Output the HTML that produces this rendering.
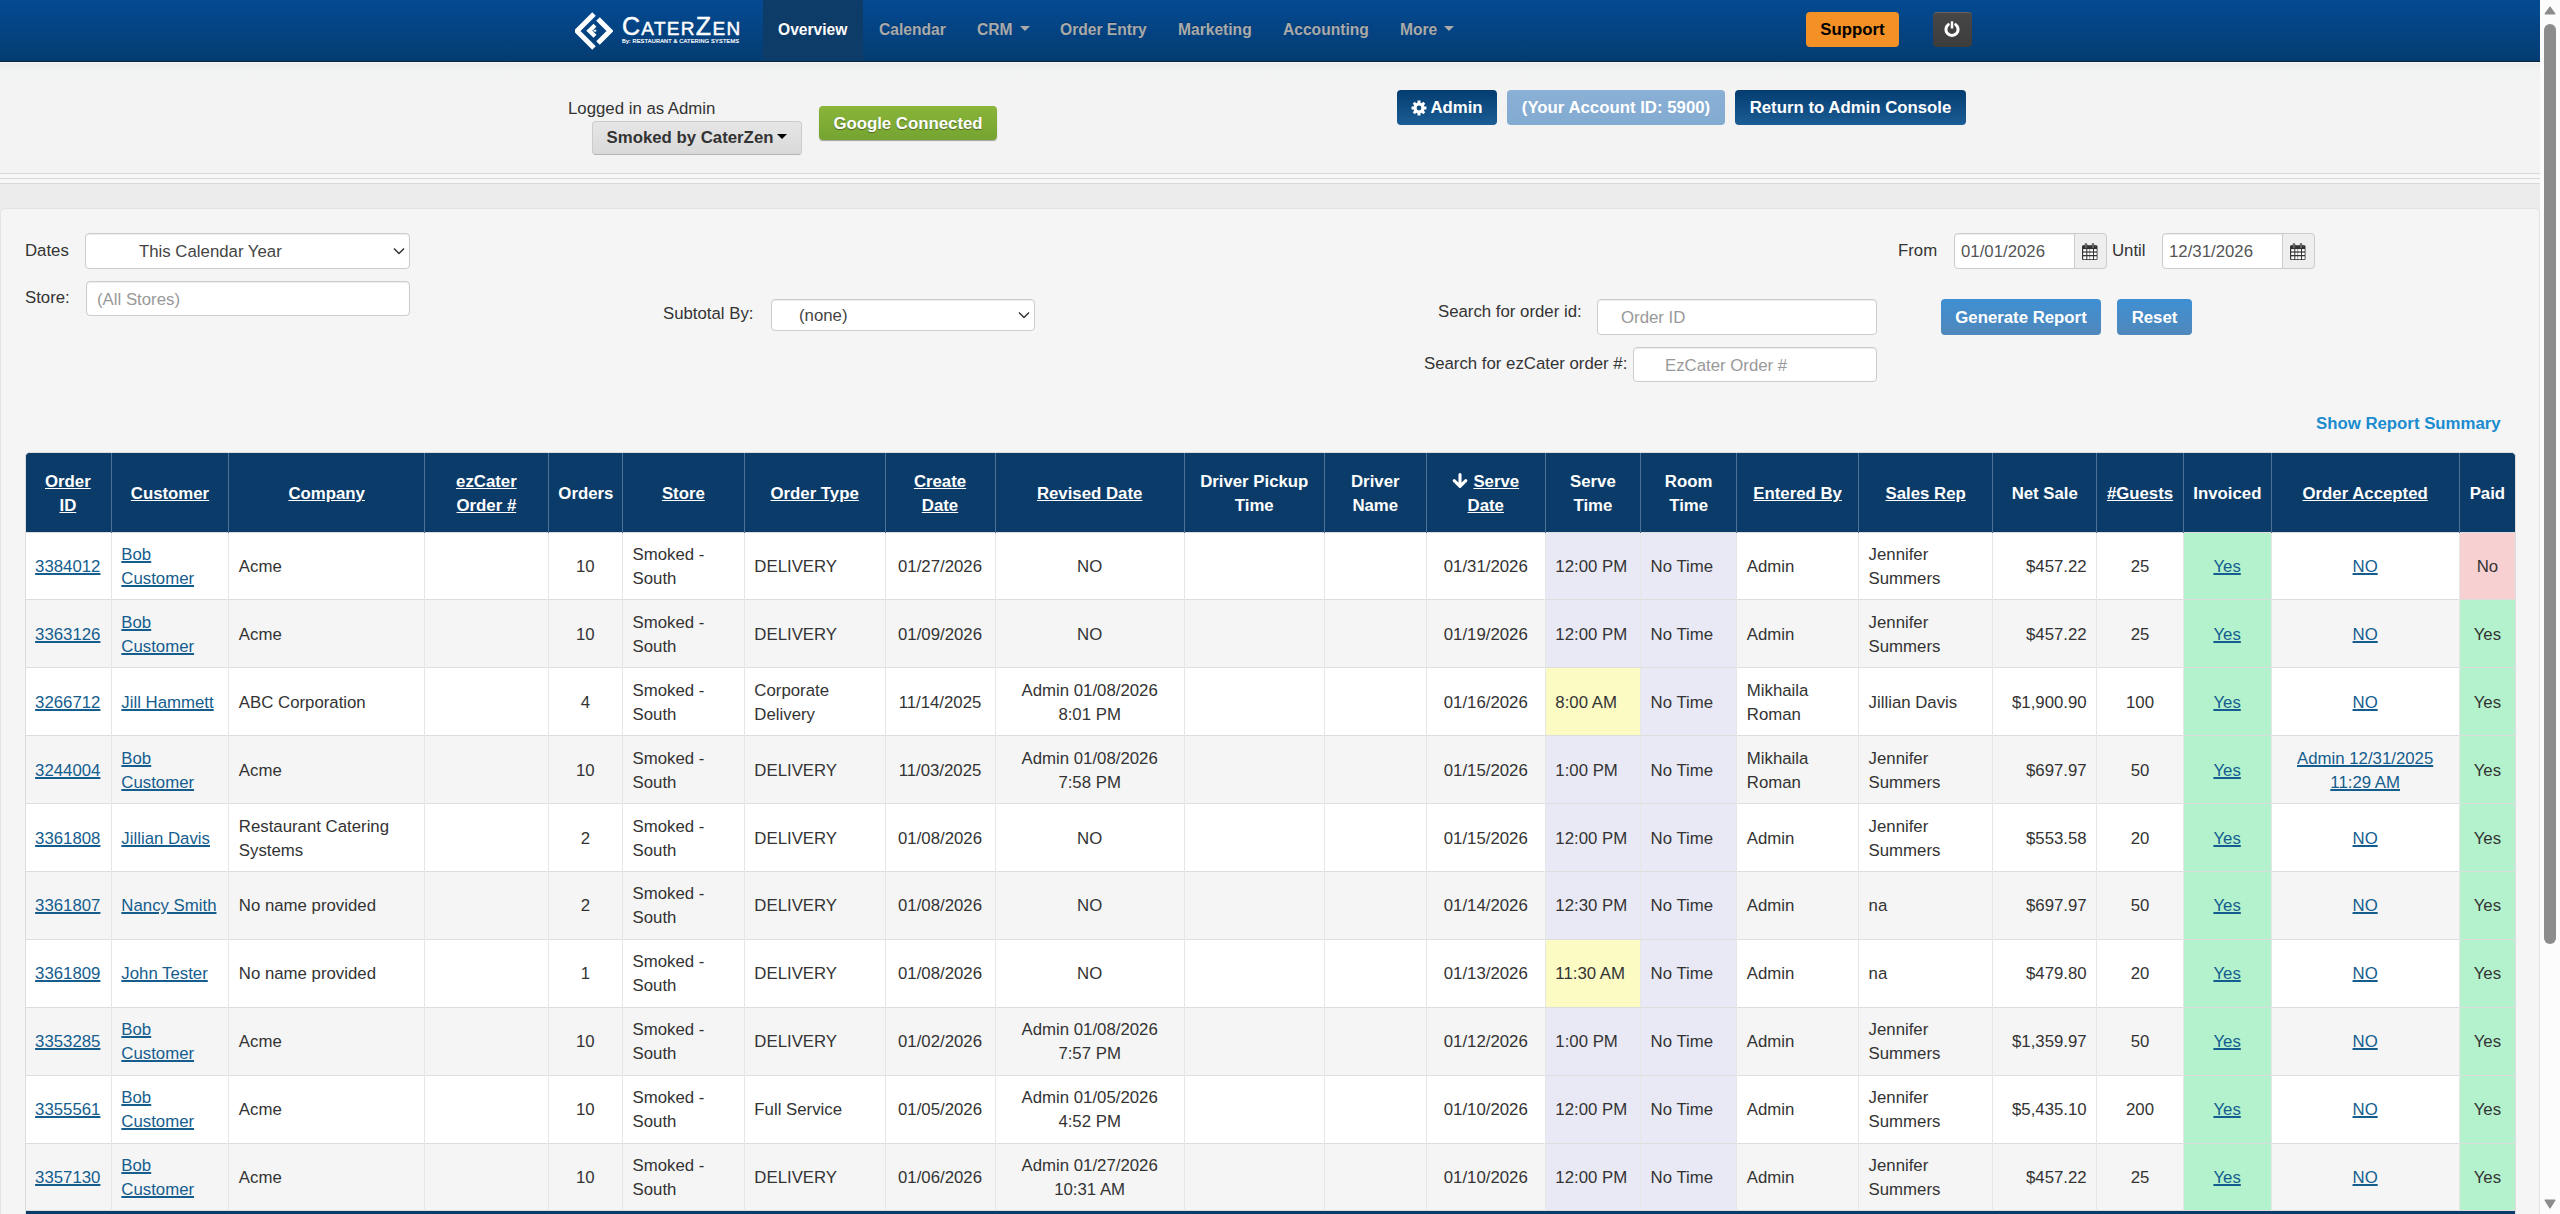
<!DOCTYPE html>
<html><head><meta charset="utf-8">
<style>
*{box-sizing:border-box;margin:0;padding:0}
html,body{width:2560px;height:1214px;overflow:hidden}
body{font-family:"Liberation Sans",sans-serif;font-size:16.8px;line-height:24px;color:#333;background:#ececec;position:relative}
.abs{position:absolute}
#nav{left:0;top:0;width:2540px;height:62px;background:linear-gradient(#044a93,#043c71);border-bottom:1px solid #0b1f33}
.nl{position:absolute;top:18px;font-weight:bold;color:#aaaaaa;font-size:15.6px;text-shadow:0 -1px 0 rgba(0,0,0,.25);line-height:24px;white-space:nowrap}
.caret{display:inline-block;width:0;height:0;border-left:5px solid transparent;border-right:5px solid transparent;border-top:5px solid;vertical-align:middle;margin-left:4px;position:relative;top:-2px}
#hdr{left:0;top:62px;width:2540px;height:111px;background:linear-gradient(#f7f7f7 0,#f7f7f7 1px,#eaebeb 1px,#f1f2f2 9px,#f3f3f3 20px)}
.btn{position:absolute;border-radius:4px;font-weight:bold;text-align:center;white-space:nowrap}
#lines{left:0;top:173px;width:2540px;height:35px;background:#ececec}
#panel{left:0;top:208px;width:2540px;height:1100px;background:#f5f5f5;border:1px solid #e3e3e3;border-radius:5px}
.lbl{position:absolute;white-space:nowrap;color:#333}
.inp{position:absolute;background:#fff;border:1px solid #ccc;border-radius:4px;color:#555;white-space:nowrap;box-shadow:inset 0 1px 1px rgba(0,0,0,.075)}
.ph{color:#999}
#scroll{left:2540px;top:0;width:20px;height:1214px;background:#fcfcfc}
table{position:absolute;left:-1.5px;top:0;border-collapse:collapse;table-layout:fixed;width:2490px}
th{background:#0b3c69;color:#fff;font-weight:bold;text-align:center;vertical-align:middle;border-left:1px solid #4f7095;padding:4px 9.6px 0;height:79px}
th:first-child{border-left:0}
th u{text-decoration:underline}
td{border-top:1px solid #ddd;border-left:1px solid #e6e6e6;vertical-align:middle;padding:2px 9.6px 0;height:67.9px}
tr.o td{background:#fff}
tr.e td{background:#f5f5f5}
td.c{text-align:center}
td.r{text-align:right}
a{color:#145d8e;text-decoration:underline;text-decoration-thickness:1.5px}
tr td.st{background:#e9e9f5}
tr td.y{background:#fcfbc4}
tr td.g{background:#b3f2cc}
tr td.rd{background:#f7d0d1}
</style></head>
<body>
<div id="nav" class="abs">
  <svg class="abs" style="left:575px;top:12px" width="38" height="38" viewBox="0 0 38 38">
    <path d="M19 2 L2 19 L19 36" fill="none" stroke="#fff" stroke-width="5"/>
    <path d="M23 7 L35 19 L23 31" fill="none" stroke="#fff" stroke-width="5"/>
    <path d="M20 13.2 L14.3 18.7 L20 24.2" fill="none" stroke="#fff" stroke-width="4.2"/><rect x="18.5" y="17.8" width="2.8" height="1.8" fill="#fff"/>
  </svg>
  <div class="abs" style="left:622px;top:14px;color:#fff;font-size:25px;line-height:25px;letter-spacing:1.3px;-webkit-text-stroke:0.45px #fff;white-space:nowrap">C<span style="font-size:19px">ATER</span>Z<span style="font-size:19px">EN</span></div>
  <div class="abs" style="left:622px;top:38px;color:#fff;font-size:5.6px;line-height:6px;white-space:nowrap;font-weight:normal;letter-spacing:0.2px;-webkit-text-stroke:0.2px #fff">By: RESTAURANT &amp; CATERING SYSTEMS</div>
  <div class="abs" style="left:763px;top:0;width:100px;height:60px;background:#0e3c69"></div>
  <div class="nl" style="left:778px;color:#fff">Overview</div>
  <div class="nl" style="left:879px">Calendar</div>
  <div class="nl" style="left:977px">CRM<span class="caret" style="margin-left:7px"></span></div>
  <div class="nl" style="left:1060px">Order Entry</div>
  <div class="nl" style="left:1178px">Marketing</div>
  <div class="nl" style="left:1283px">Accounting</div>
  <div class="nl" style="left:1400px">More<span class="caret" style="margin-left:7px"></span></div>
  <div class="btn" style="left:1806px;top:12px;width:93px;height:35px;line-height:35px;background:#f39026;color:#000">Support</div>
  <div class="btn" style="left:1933px;top:12px;width:39px;height:35px;background:linear-gradient(#474747,#3c3c3c);border-top:1px solid #6a625c"><svg class="abs" style="left:9.2px;top:5.2px" width="20" height="20" viewBox="0 0 20 20"><path d="M6.3 6.6 A6.1 6.1 0 1 0 13.7 6.6" fill="none" stroke="#fff" stroke-width="3" stroke-linecap="round"/><path d="M10 3.3v7.2" stroke="#fff" stroke-width="2.5"/></svg></div>
</div>
<div id="hdr" class="abs">
  <div class="lbl" style="left:568px;top:35px">Logged in as Admin</div>
  <div class="btn" style="left:592px;top:59px;width:210px;height:34px;line-height:32px;background:linear-gradient(#e6e6e6,#d9d9d9);border:1px solid #ccc;border-bottom-color:#b3b3b3;color:#333">Smoked by CaterZen<span class="caret" style="color:#000"></span></div>
  <div class="btn" style="left:819px;top:44px;width:178px;height:33.5px;line-height:35px;background:linear-gradient(#8ab43a,#74a431);box-shadow:0 1px 1px rgba(0,0,0,.35);color:#fff;text-shadow:0 1px 1px rgba(0,0,0,.4)">Google Connected</div>
  <div class="btn" style="left:1397px;top:28px;width:100px;height:35px;line-height:35px;background:linear-gradient(#043c70,#1b5d95);color:#fff"><svg width="16" height="16" viewBox="0 0 16 16" style="vertical-align:-3px;margin-right:3px"><path fill="#fff" fill-rule="evenodd" d="M6.61 2.58 L6.46 0.56 L9.54 0.56 L9.39 2.58 L10.85 3.18 L12.17 1.65 L14.35 3.83 L12.82 5.15 L13.42 6.61 L15.44 6.46 L15.44 9.54 L13.42 9.39 L12.82 10.85 L14.35 12.17 L12.17 14.35 L10.85 12.82 L9.39 13.42 L9.54 15.44 L6.46 15.44 L6.61 13.42 L5.15 12.82 L3.83 14.35 L1.65 12.17 L3.18 10.85 L2.58 9.39 L0.56 9.54 L0.56 6.46 L2.58 6.61 L3.18 5.15 L1.65 3.83 L3.83 1.65 L5.15 3.18Z M10.4 8a2.4 2.4 0 1 0 -4.8 0a2.4 2.4 0 1 0 4.8 0Z"/></svg>Admin</div>
  <div class="btn" style="left:1507px;top:28px;width:218px;height:35px;line-height:35px;background:linear-gradient(#8ab0d6,#83aad0);color:#fff">(Your Account ID: 5900)</div>
  <div class="btn" style="left:1735px;top:28px;width:231px;height:35px;line-height:35px;background:linear-gradient(#043c70,#1b5d95);color:#fff">Return to Admin Console</div>
</div>
<div id="lines" class="abs"><div class="abs" style="left:0;top:0;width:2540px;height:1px;background:#d8d8d8"></div><div class="abs" style="left:0;top:1px;width:2540px;height:4px;background:#f7f7f7"></div><div class="abs" style="left:0;top:5px;width:2540px;height:1px;background:#d8d8d8"></div><div class="abs" style="left:0;top:6px;width:2540px;height:4px;background:#f7f7f7"></div><div class="abs" style="left:0;top:10px;width:2540px;height:1px;background:#d8d8d8"></div></div>
<div id="panel" class="abs"></div>
<div class="lbl" style="left:25px;top:239px">Dates</div>
<div class="inp" style="left:85px;top:233px;width:325px;height:36px;line-height:36px;padding-left:53px;color:#444">This Calendar Year<svg width="12" height="8" viewBox="0 0 12 8" style="position:absolute;right:4px;top:13px"><path d="M1 1.5l5 5 5-5" fill="none" stroke="#333" stroke-width="1.5"/></svg></div>
<div class="lbl" style="left:25px;top:286px">Store:</div>
<div class="inp" style="left:86px;top:281px;width:324px;height:35px;line-height:35px;padding-left:10px;color:#999">(All Stores)</div>
<div class="lbl" style="left:663px;top:302px">Subtotal By:</div>
<div class="inp" style="left:771px;top:299px;width:264px;height:32px;line-height:32px;padding-left:27px;color:#444">(none)<svg width="12" height="8" viewBox="0 0 12 8" style="position:absolute;right:4px;top:11px"><path d="M1 1.5l5 5 5-5" fill="none" stroke="#333" stroke-width="1.5"/></svg></div>
<div class="lbl" style="left:1438px;top:300px">Search for order id:</div>
<div class="inp" style="left:1597px;top:299px;width:280px;height:36px;line-height:36px;padding-left:23px;color:#999">Order ID</div>
<div class="lbl" style="left:1424px;top:352px">Search for ezCater order #:</div>
<div class="inp" style="left:1633px;top:347px;width:244px;height:35px;line-height:35px;padding-left:31px;color:#999">EzCater Order #</div>
<div class="lbl" style="left:1898px;top:239px">From</div>
<div class="inp" style="left:1954px;top:233px;width:152px;height:36px;line-height:36px;padding-left:6px;color:#555">01/01/2026<div style="position:absolute;left:119px;top:-1px;width:33px;height:36px;background:#eee;border:1px solid #ccc;border-radius:0 4px 4px 0;"><svg style="position:absolute;left:7px;top:9px" width="16" height="17" viewBox="0 0 16 17"><rect x="0" y="2.2" width="15.5" height="14.8" rx="1.2" fill="#333"/><g fill="#fff"><rect x="1.2" y="6.1" width="3.1" height="2.3"/><rect x="1.2" y="9.6" width="3.1" height="2.4"/><rect x="1.2" y="13.3" width="3.1" height="2.9"/><rect x="5.3" y="6.1" width="2.3" height="2.3"/><rect x="5.3" y="9.6" width="2.3" height="2.4"/><rect x="5.3" y="13.3" width="2.3" height="2.9"/><rect x="8.1" y="6.1" width="2.9" height="2.3"/><rect x="8.1" y="9.6" width="2.9" height="2.4"/><rect x="8.1" y="13.3" width="2.9" height="2.9"/><rect x="12" y="6.1" width="2.7" height="2.3"/><rect x="12" y="9.6" width="2.7" height="2.4"/><rect x="12" y="13.3" width="2.7" height="2.9"/></g><path d="M3.2 4.5V1.6a0.8 1.1 0 0 1 1.6 0V4.5M10.2 4.5V1.6a0.8 1.1 0 0 1 1.6 0V4.5" fill="#eee" stroke="#333" stroke-width="1"/></svg></div></div>
<div class="lbl" style="left:2112px;top:239px">Until</div>
<div class="inp" style="left:2162px;top:233px;width:152px;height:36px;line-height:36px;padding-left:6px;color:#555">12/31/2026<div style="position:absolute;left:119px;top:-1px;width:33px;height:36px;background:#eee;border:1px solid #ccc;border-radius:0 4px 4px 0;"><svg style="position:absolute;left:7px;top:9px" width="16" height="17" viewBox="0 0 16 17"><rect x="0" y="2.2" width="15.5" height="14.8" rx="1.2" fill="#333"/><g fill="#fff"><rect x="1.2" y="6.1" width="3.1" height="2.3"/><rect x="1.2" y="9.6" width="3.1" height="2.4"/><rect x="1.2" y="13.3" width="3.1" height="2.9"/><rect x="5.3" y="6.1" width="2.3" height="2.3"/><rect x="5.3" y="9.6" width="2.3" height="2.4"/><rect x="5.3" y="13.3" width="2.3" height="2.9"/><rect x="8.1" y="6.1" width="2.9" height="2.3"/><rect x="8.1" y="9.6" width="2.9" height="2.4"/><rect x="8.1" y="13.3" width="2.9" height="2.9"/><rect x="12" y="6.1" width="2.7" height="2.3"/><rect x="12" y="9.6" width="2.7" height="2.4"/><rect x="12" y="13.3" width="2.7" height="2.9"/></g><path d="M3.2 4.5V1.6a0.8 1.1 0 0 1 1.6 0V4.5M10.2 4.5V1.6a0.8 1.1 0 0 1 1.6 0V4.5" fill="#eee" stroke="#333" stroke-width="1"/></svg></div></div>
<div class="btn" style="left:1941px;top:299px;width:160px;height:36px;line-height:38px;background:linear-gradient(#3f8fd3,#4f88bb);color:#fff">Generate Report</div>
<div class="btn" style="left:2117px;top:299px;width:75px;height:36px;line-height:38px;background:linear-gradient(#3f8fd3,#4f88bb);color:#fff">Reset</div>
<div class="lbl" style="left:2316px;top:412px;font-weight:bold;color:#1a8ccf">Show Report Summary</div>
<div id="tw" class="abs" style="left:25px;top:452px;width:2491px;height:800px;border:1px solid #ddd;border-radius:5px;overflow:hidden;background:#0b3c69"><table>
<colgroup><col style="width:86.25px"><col style="width:117.5px"><col style="width:195.75px"><col style="width:123.75px"><col style="width:74.25px"><col style="width:121.75px"><col style="width:140.75px"><col style="width:110px"><col style="width:189.25px"><col style="width:140px"><col style="width:102px"><col style="width:119px"><col style="width:95.25px"><col style="width:96.25px"><col style="width:121.75px"><col style="width:134.25px"><col style="width:104px"><col style="width:86.5px"><col style="width:87.75px"><col style="width:188.25px"><col style="width:55.75px"></colgroup>
<tr class="h">
<th><u>Order ID</u></th>
<th><u>Customer</u></th>
<th><u>Company</u></th>
<th><u>ezCater Order #</u></th>
<th>Orders</th>
<th><u>Store</u></th>
<th><u>Order Type</u></th>
<th><u>Create Date</u></th>
<th><u>Revised Date</u></th>
<th>Driver Pickup Time</th>
<th>Driver Name</th>
<th><svg width="16" height="16" viewBox="0 0 16 16" style="vertical-align:-1.5px;margin-right:5px"><path d="M8 1.6V12.5M2.2 7.6L8 13.4L13.8 7.6" fill="none" stroke="#fff" stroke-width="3.1" stroke-linecap="round" stroke-linejoin="round"/></svg><u>Serve Date</u></th>
<th>Serve Time</th>
<th>Room Time</th>
<th><u>Entered By</u></th>
<th><u>Sales Rep</u></th>
<th>Net Sale</th>
<th><u>#Guests</u></th>
<th>Invoiced</th>
<th><u>Order Accepted</u></th>
<th>Paid</th>
</tr>
<tr class="o">
<td class=""><a>3384012</a></td>
<td class=""><a>Bob Customer</a></td>
<td class="">Acme</td>
<td class=""></td>
<td class="c">10</td>
<td class="">Smoked - South</td>
<td class="">DELIVERY</td>
<td class="c">01/27/2026</td>
<td class="c">NO</td>
<td class=""></td>
<td class=""></td>
<td class="c">01/31/2026</td>
<td class="st">12:00 PM</td>
<td class="st">No Time</td>
<td class="">Admin</td>
<td class="">Jennifer Summers</td>
<td class="r">$457.22</td>
<td class="c">25</td>
<td class="c g"><a>Yes</a></td>
<td class="c"><a>NO</a></td>
<td class="c rd">No</td>
</tr>
<tr class="e">
<td class=""><a>3363126</a></td>
<td class=""><a>Bob Customer</a></td>
<td class="">Acme</td>
<td class=""></td>
<td class="c">10</td>
<td class="">Smoked - South</td>
<td class="">DELIVERY</td>
<td class="c">01/09/2026</td>
<td class="c">NO</td>
<td class=""></td>
<td class=""></td>
<td class="c">01/19/2026</td>
<td class="st">12:00 PM</td>
<td class="st">No Time</td>
<td class="">Admin</td>
<td class="">Jennifer Summers</td>
<td class="r">$457.22</td>
<td class="c">25</td>
<td class="c g"><a>Yes</a></td>
<td class="c"><a>NO</a></td>
<td class="c g">Yes</td>
</tr>
<tr class="o">
<td class=""><a>3266712</a></td>
<td class=""><a>Jill Hammett</a></td>
<td class="">ABC Corporation</td>
<td class=""></td>
<td class="c">4</td>
<td class="">Smoked - South</td>
<td class="">Corporate Delivery</td>
<td class="c">11/14/2025</td>
<td class="c">Admin 01/08/2026 8:01 PM</td>
<td class=""></td>
<td class=""></td>
<td class="c">01/16/2026</td>
<td class="st y">8:00 AM</td>
<td class="st">No Time</td>
<td class="">Mikhaila Roman</td>
<td class="">Jillian Davis</td>
<td class="r">$1,900.90</td>
<td class="c">100</td>
<td class="c g"><a>Yes</a></td>
<td class="c"><a>NO</a></td>
<td class="c g">Yes</td>
</tr>
<tr class="e">
<td class=""><a>3244004</a></td>
<td class=""><a>Bob Customer</a></td>
<td class="">Acme</td>
<td class=""></td>
<td class="c">10</td>
<td class="">Smoked - South</td>
<td class="">DELIVERY</td>
<td class="c">11/03/2025</td>
<td class="c">Admin 01/08/2026 7:58 PM</td>
<td class=""></td>
<td class=""></td>
<td class="c">01/15/2026</td>
<td class="st">1:00 PM</td>
<td class="st">No Time</td>
<td class="">Mikhaila Roman</td>
<td class="">Jennifer Summers</td>
<td class="r">$697.97</td>
<td class="c">50</td>
<td class="c g"><a>Yes</a></td>
<td class="c"><a>Admin 12/31/2025 11:29 AM</a></td>
<td class="c g">Yes</td>
</tr>
<tr class="o">
<td class=""><a>3361808</a></td>
<td class=""><a>Jillian Davis</a></td>
<td class="">Restaurant Catering Systems</td>
<td class=""></td>
<td class="c">2</td>
<td class="">Smoked - South</td>
<td class="">DELIVERY</td>
<td class="c">01/08/2026</td>
<td class="c">NO</td>
<td class=""></td>
<td class=""></td>
<td class="c">01/15/2026</td>
<td class="st">12:00 PM</td>
<td class="st">No Time</td>
<td class="">Admin</td>
<td class="">Jennifer Summers</td>
<td class="r">$553.58</td>
<td class="c">20</td>
<td class="c g"><a>Yes</a></td>
<td class="c"><a>NO</a></td>
<td class="c g">Yes</td>
</tr>
<tr class="e">
<td class=""><a>3361807</a></td>
<td class=""><a>Nancy Smith</a></td>
<td class="">No name provided</td>
<td class=""></td>
<td class="c">2</td>
<td class="">Smoked - South</td>
<td class="">DELIVERY</td>
<td class="c">01/08/2026</td>
<td class="c">NO</td>
<td class=""></td>
<td class=""></td>
<td class="c">01/14/2026</td>
<td class="st">12:30 PM</td>
<td class="st">No Time</td>
<td class="">Admin</td>
<td class="">na</td>
<td class="r">$697.97</td>
<td class="c">50</td>
<td class="c g"><a>Yes</a></td>
<td class="c"><a>NO</a></td>
<td class="c g">Yes</td>
</tr>
<tr class="o">
<td class=""><a>3361809</a></td>
<td class=""><a>John Tester</a></td>
<td class="">No name provided</td>
<td class=""></td>
<td class="c">1</td>
<td class="">Smoked - South</td>
<td class="">DELIVERY</td>
<td class="c">01/08/2026</td>
<td class="c">NO</td>
<td class=""></td>
<td class=""></td>
<td class="c">01/13/2026</td>
<td class="st y">11:30 AM</td>
<td class="st">No Time</td>
<td class="">Admin</td>
<td class="">na</td>
<td class="r">$479.80</td>
<td class="c">20</td>
<td class="c g"><a>Yes</a></td>
<td class="c"><a>NO</a></td>
<td class="c g">Yes</td>
</tr>
<tr class="e">
<td class=""><a>3353285</a></td>
<td class=""><a>Bob Customer</a></td>
<td class="">Acme</td>
<td class=""></td>
<td class="c">10</td>
<td class="">Smoked - South</td>
<td class="">DELIVERY</td>
<td class="c">01/02/2026</td>
<td class="c">Admin 01/08/2026 7:57 PM</td>
<td class=""></td>
<td class=""></td>
<td class="c">01/12/2026</td>
<td class="st">1:00 PM</td>
<td class="st">No Time</td>
<td class="">Admin</td>
<td class="">Jennifer Summers</td>
<td class="r">$1,359.97</td>
<td class="c">50</td>
<td class="c g"><a>Yes</a></td>
<td class="c"><a>NO</a></td>
<td class="c g">Yes</td>
</tr>
<tr class="o">
<td class=""><a>3355561</a></td>
<td class=""><a>Bob Customer</a></td>
<td class="">Acme</td>
<td class=""></td>
<td class="c">10</td>
<td class="">Smoked - South</td>
<td class="">Full Service</td>
<td class="c">01/05/2026</td>
<td class="c">Admin 01/05/2026 4:52 PM</td>
<td class=""></td>
<td class=""></td>
<td class="c">01/10/2026</td>
<td class="st">12:00 PM</td>
<td class="st">No Time</td>
<td class="">Admin</td>
<td class="">Jennifer Summers</td>
<td class="r">$5,435.10</td>
<td class="c">200</td>
<td class="c g"><a>Yes</a></td>
<td class="c"><a>NO</a></td>
<td class="c g">Yes</td>
</tr>
<tr class="e">
<td class=""><a>3357130</a></td>
<td class=""><a>Bob Customer</a></td>
<td class="">Acme</td>
<td class=""></td>
<td class="c">10</td>
<td class="">Smoked - South</td>
<td class="">DELIVERY</td>
<td class="c">01/06/2026</td>
<td class="c">Admin 01/27/2026 10:31 AM</td>
<td class=""></td>
<td class=""></td>
<td class="c">01/10/2026</td>
<td class="st">12:00 PM</td>
<td class="st">No Time</td>
<td class="">Admin</td>
<td class="">Jennifer Summers</td>
<td class="r">$457.22</td>
<td class="c">25</td>
<td class="c g"><a>Yes</a></td>
<td class="c"><a>NO</a></td>
<td class="c g">Yes</td>
</tr>
<tr class="h"><th colspan="21" style="height:60px;border-top:1px solid #ddd"></th></tr>
</table></div>
<div id="scroll" class="abs"><svg class="abs" style="left:4px;top:6px" width="12" height="9" viewBox="0 0 12 9"><path d="M6 1.2L10.8 7.8H1.2z" fill="#8c8c8c" stroke="#8c8c8c" stroke-width="1.4" stroke-linejoin="round"/></svg><div class="abs" style="left:4px;top:24px;width:12px;height:920px;border-radius:6px;background:#8c8c8c"></div><svg class="abs" style="left:4px;top:1199px" width="12" height="10" viewBox="0 0 12 10"><path d="M1.2 1.2H10.8L6 8.8z" fill="#8c8c8c" stroke="#8c8c8c" stroke-width="1.4" stroke-linejoin="round"/></svg></div>
</body></html>
